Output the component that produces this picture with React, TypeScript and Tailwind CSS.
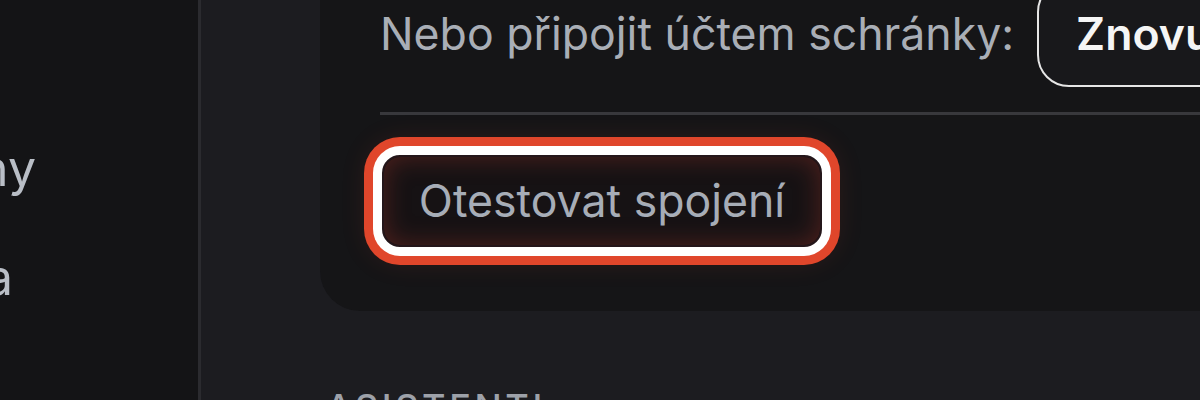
import React from "react";

export default function App() {
  return (
    <div
      className="w-[1200px] h-[400px] overflow-hidden flex bg-[#1c1c20]"
      style={{ fontFamily: "Inter, 'Noto Sans', sans-serif" }}
    >
      {/* Sidebar */}
      <aside className="w-[201px] shrink-0 h-full bg-[#141416] border-r-[3px] border-[#2b2b2f] flex flex-col pt-[143px] gap-[59px]">
        <div className="w-[36px] flex justify-end whitespace-nowrap text-[50px] leading-[50px] text-[#b9bec6]">
          Šablony
        </div>
        <div className="w-[13px] flex justify-end whitespace-nowrap text-[50px] leading-[50px] text-[#b9bec6]">
          Statistika
        </div>
      </aside>

      {/* Main */}
      <main className="flex-1 min-w-0 h-full pl-[119px] flex flex-col">
        <section className="w-[1100px] shrink-0 -mt-[60px] rounded-[40px] bg-[#151517] pl-[60px] pt-[40px] pb-[64px]">
          <div className="flex items-center gap-[23px] h-[107px]">
            <span className="text-[44.6px] leading-[44px] text-[#a9aeb6] whitespace-nowrap">
              Nebo připojit účtem schránky:
            </span>
            <button className="h-[107px] rounded-[32px] border-2 border-[#e6e6e6] pl-[37px] pr-[40px] text-[44.6px] leading-[44px] font-semibold text-[#f5f5f5] whitespace-nowrap bg-[#18181b]">
              Znovu připojit
            </button>
          </div>
          <div className="mt-[25px] h-[3px] bg-[#38383c]" />
          <div className="mt-[40px] ml-[2px]">
            <button className="w-[440px] h-[92px] rounded-[18px] border-2 border-[#24161a] bg-[#161214] text-[44.6px] leading-[44px] text-[#a7adb7] flex items-center justify-center shadow-[0_0_0_9px_#ffffff,0_0_0_18px_#e0462b,0_0_30px_12px_rgba(224,70,43,0.16),inset_0_0_26px_rgba(190,60,45,0.35)]">
              Otestovat spojení
            </button>
          </div>
        </section>
        <div className="mt-[78px] ml-[6px] text-[36px] leading-[36px] tracking-[0.1em] text-[#9da1a9] font-medium whitespace-nowrap">
          ASISTENTI
        </div>
      </main>
    </div>
  );
}
